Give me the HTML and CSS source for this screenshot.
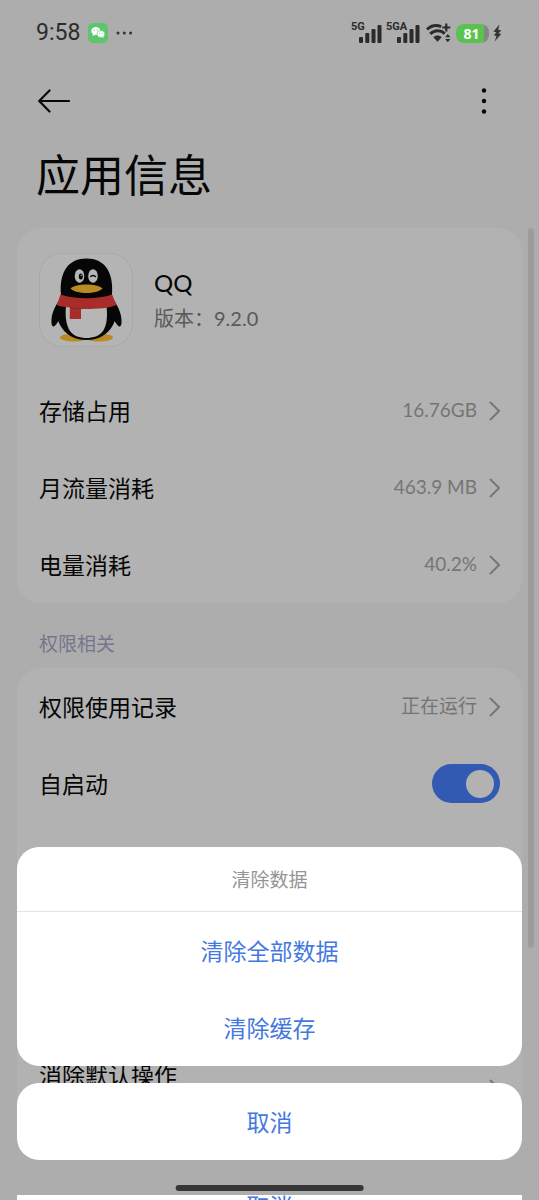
FILE: index.html
```html
<!DOCTYPE html>
<html lang="zh-CN">
<head>
<meta charset="utf-8">
<meta name="viewport" content="width=device-width, initial-scale=1">
<title>应用信息</title>
<link rel="stylesheet" href="styles.css">
</head>
<body>
<div class="screen">
  <header class="status">
    <div class="status-side">
      <span class="clock">9:58</span>
      <svg class="wechat" width="20" height="20" viewBox="0 0 20 20" aria-hidden="true">
        <rect width="20" height="20" rx="5" fill="#5bc66c"/>
        <ellipse cx="7.8" cy="8" rx="4.5" ry="3.9" fill="#fff"/>
        <path d="M5 10.500l-.5 2.500 2.800-1.300z" fill="#fff"/>
        <ellipse cx="12.800" cy="11" rx="4" ry="3.400" fill="#fff" stroke="#5bc66c" stroke-width=".6"/>
        <path d="M13.500 13.800l2.200 1-.4-2z" fill="#fff"/>
        <circle cx="6.300" cy="6.900" r=".6" fill="#5bc66c"/><circle cx="9.300" cy="6.900" r=".6" fill="#5bc66c"/>
        <circle cx="11.500" cy="10.200" r=".5" fill="#5bc66c"/><circle cx="14.100" cy="10.200" r=".5" fill="#5bc66c"/>
      </svg>
      <svg width="17" height="4" viewBox="0 0 17 4" fill="#333" aria-hidden="true"><circle cx="2" cy="2" r="1.500"/><circle cx="8.300" cy="2" r="1.500"/><circle cx="14.600" cy="2" r="1.500"/></svg>
    </div>
    <div class="status-side status-right">
      <div class="signal"><span class="net">5G</span><svg width="23" height="19" viewBox="0 0 23 19" fill="#2b2b2b" aria-hidden="true"><rect y="13" width="4" height="6" rx="1"/><rect x="6.300" y="9" width="4" height="10" rx="1"/><rect x="12.500" y="5" width="4" height="14" rx="1"/><rect x="18.500" y="1" width="4" height="18" rx="1"/></svg></div>
      <div class="signal signal-wide"><span class="net">5GA</span><svg width="23" height="19" viewBox="0 0 23 19" fill="#2b2b2b" aria-hidden="true"><rect y="13" width="4" height="6" rx="1"/><rect x="6.300" y="9" width="4" height="10" rx="1"/><rect x="12.500" y="5" width="4" height="14" rx="1"/><rect x="18.500" y="1" width="4" height="18" rx="1"/></svg></div>
      <svg class="wifi" width="25" height="20" viewBox="0 0 25 20" fill="none" stroke="#2b2b2b" aria-hidden="true">
        <path d="M1 6.500C5 2.700 10.500 1.800 15.200 3.600" stroke-width="3"/>
        <path d="M4.200 10.900C8.600 6.800 14.600 6.800 18.800 10.600" stroke-width="3"/>
        <path d="M7.300 14.200C9.800 12 13.400 12 15.700 14.200L11.500 18.800z" fill="#2b2b2b" stroke="none"/>
        <path d="M20.300 .5v8M16.300 4.500h8" stroke-width="2.200"/>
        <path d="M21.800 11l2.600 3.300h-5.200zM21.800 19.300l2.600-3.300h-5.200z" fill="#2b2b2b" stroke="none"/>
      </svg>
      <div class="battery"><span>81</span></div>
      <svg class="bolt" width="9" height="18" viewBox="0 0 9 18" fill="#333" aria-hidden="true"><path d="M6.500 .5L.5 7.500 3.500 8.500.7 11.200 3.500 12 1.600 17.500 8.300 10 5.300 9.200 8.300 6.600 5.200 5.800z"/></svg>
    </div>
  </header>

  <nav class="toolbar">
    <button class="icon-btn" type="button" aria-label="返回">
      <svg width="32" height="24" viewBox="0 0 32 24" fill="none" stroke="#080808" stroke-width="2.200" stroke-linecap="round" stroke-linejoin="round"><path d="M31 12H1.500M11.500 1.500L1.200 12l10.300 10.500"/></svg>
    </button>
    <button class="icon-btn" type="button" aria-label="更多">
      <svg width="6" height="26" viewBox="0 0 6 26" fill="#080808"><circle cx="3" cy="2.500" r="2.200"/><circle cx="3" cy="13" r="2.200"/><circle cx="3" cy="23.500" r="2.200"/></svg>
    </button>
  </nav>

  <h1 class="title">应用信息</h1>

  <main class="content">
    <section class="card">
      <div class="app">
        <svg class="app-icon" width="94" height="94" viewBox="0 0 94 94" aria-hidden="true">
          <rect x=".5" y=".5" width="93" height="93" rx="22" fill="#b4b4b4" stroke="#a9a9a9"/>
          <ellipse cx="35" cy="84.500" rx="14" ry="4" fill="#b88a21"/>
          <ellipse cx="60" cy="84.500" rx="14" ry="4" fill="#b88a21"/>
          <path d="M22 45C15 54 12 62 12.500 70c.2 4 2.500 4.500 4.500 1.500l6-8h49l6 8c2 3 4.200 2.500 4.500-1.500C83 62 80 54 73 45z" fill="#060606"/>
          <path d="M22 42C20 18 30 5.500 47.500 5.500S75 18 73 42c5 14 5 22 1 30-5 9-14 15-26.500 15S26 81 21 72c-4-8-4-16 1-30z" fill="#060606"/>
          <path d="M27.500 50h39.500c2 12 1 22-3 28-3.500 5-10 7-16.500 7S34.500 83 31 78c-4-6-5.500-16-3.500-28z" fill="#b6b6b6"/>
          <path d="M21.500 41.500C36 46.500 59 46.500 73 41.500l4.500 10.500c-9 3.500-22 4.300-35.500 4V66H30.800V54.500C26 54 21 53.500 17.800 52z" fill="#a82c2a"/>
          <path d="M31 54.500c4 .9 7 1.300 11 1.500" stroke="#8d2424" fill="none"/>
          <ellipse cx="40.500" cy="23" rx="4.800" ry="6.800" fill="#b6b6b6"/>
          <ellipse cx="54" cy="23" rx="4.800" ry="6.800" fill="#b6b6b6"/>
          <ellipse cx="41.800" cy="23.500" rx="2" ry="3" fill="#060606"/><circle cx="42.200" cy="22.200" r=".7" fill="#b6b6b6"/>
          <path d="M51.300 24c1.300-2 4-2 5.500 0" fill="none" stroke="#060606" stroke-width="1.300"/>
          <path d="M31.500 35.500C37 30.300 58 30.300 63.500 35.500C58 41.500 37 41.500 31.500 35.500z" fill="#b88a21"/>
        </svg>
        <div class="app-text">
          <h2 class="app-name">QQ</h2>
          <p class="app-version">版本：9.2.0</p>
        </div>
      </div>
      <a class="row" href="#storage"><span class="label">存储占用</span><span class="value">16.76GB</span><svg class="chevron" viewBox="0 0 11 20"><path d="M1 1l9 9-9 9"/></svg></a>
      <a class="row" href="#data"><span class="label">月流量消耗</span><span class="value">463.9 MB</span><svg class="chevron" viewBox="0 0 11 20"><path d="M1 1l9 9-9 9"/></svg></a>
      <a class="row" href="#power"><span class="label">电量消耗</span><span class="value">40.2%</span><svg class="chevron" viewBox="0 0 11 20"><path d="M1 1l9 9-9 9"/></svg></a>
    </section>

    <h3 class="section">权限相关</h3>

    <section class="card">
      <a class="row" href="#records"><span class="label">权限使用记录</span><span class="value">正在运行</span><svg class="chevron" viewBox="0 0 11 20"><path d="M1 1l9 9-9 9"/></svg></a>
      <div class="row"><label class="label" for="autostart">自启动</label><input class="toggle" id="autostart" type="checkbox" checked></div>
      <a class="row row-tall" href="#defaults"><span class="label">消除默认操作</span><svg class="chevron" viewBox="0 0 11 20"><path d="M1 1l9 9-9 9"/></svg></a>
    </section>
  </main>

  <div class="scrollbar"></div>

  <div class="sheet" role="dialog" aria-labelledby="sheet-title">
    <div class="panel">
      <h2 class="sheet-title" id="sheet-title">清除数据</h2>
      <button class="action" type="button">清除全部数据</button>
      <button class="action" type="button">清除缓存</button>
    </div>
    <div class="panel"><button class="action" type="button">取消</button></div>
  </div>

  <div class="under"><button class="action" type="button">取消</button></div>
  <div class="home"></div>
</div>
</body>
</html>
```
FILE: styles.css
```css
* { box-sizing: border-box; }

body {
  margin: 0;
  background: #adadad;
  color: #060606;
  font-family: "Noto Sans CJK SC", sans-serif;
}

h1, h2, h3, p { margin: 0; font-weight: 400; }

button {
  border: 0;
  padding: 0;
  background: none;
  font: inherit;
}

.screen {
  position: relative;
  height: 100vh;
  overflow: hidden;
}

.status {
  display: flex;
  justify-content: space-between;
  align-items: center;
  height: 66px;
  padding: 0 37px 0 36px;
}

.status-side { display: flex; align-items: center; gap: 8px; }
.clock { font: 400 23px/32px Roboto, sans-serif; color: #2b2b2b; }
.status-right { gap: 0; }

.signal {
  position: relative;
  display: flex;
  justify-content: flex-end;
  width: 31px;
}
.signal-wide { width: 34px; margin-left: 4px; }
.net {
  position: absolute;
  left: 0;
  top: -3px;
  font: 700 11px/12px Roboto, sans-serif;
  color: #2b2b2b;
}
.wifi { margin: 0 5px 0 6px; }

.battery {
  display: flex;
  align-items: center;
  justify-content: center;
  width: 33px;
  height: 19px;
  padding-right: 2px;
  border-radius: 8px;
  background: linear-gradient(90deg, #5ac34f 28px, #858585 28px);
  color: #fff;
  font: 700 14px/19px "Open Sans", sans-serif;
}
.bolt { margin-left: 4px; }

.toolbar {
  display: flex;
  justify-content: space-between;
  align-items: center;
  height: 70px;
  padding: 0 52px 0 38px;
}
.icon-btn { display: flex; }

.title {
  padding: 5px 36px 23px;
  font-size: 44px;
  line-height: 64px;
}

.content { padding: 0 17px; }

.card {
  padding: 0 22px;
  border-radius: 24px;
  background: #b2b2b2;
}

.app {
  display: flex;
  align-items: center;
  gap: 21px;
  height: 144px;
}
.app-icon { flex: none; }
.app-name { font: 400 24px/36px Lato, sans-serif; }
.app-version {
  color: #595959;
  font-family: Lato, "Noto Sans CJK SC", sans-serif;
  font-size: 20px;
  line-height: 34px;
}

.row {
  display: flex;
  align-items: center;
  height: 77px;
  color: inherit;
  text-decoration: none;
}
.label {
  flex: 1;
  padding-bottom: 2px;
  font-size: 23px;
  line-height: 34px;
}
.value {
  margin-right: 12px;
  padding-bottom: 2px;
  color: #757575;
  font-family: Lato, "Noto Sans CJK SC", sans-serif;
  font-size: 19px;
  line-height: 28px;
}
.chevron {
  width: 11px;
  height: 20px;
  fill: none;
  stroke: #777;
  stroke-width: 2;
}

.section {
  padding: 26px 22px 11px;
  color: #74778c;
  font-size: 19px;
  line-height: 28px;
}

.toggle {
  appearance: none;
  display: flex;
  align-items: center;
  justify-content: flex-end;
  width: 68px;
  height: 39px;
  margin: 0;
  padding: 6px;
  border-radius: 20px;
  background: #325ab2;
}
.toggle::before {
  content: "";
  width: 28px;
  height: 28px;
  border-radius: 50%;
  background: #b2b2b2;
}

.row-tall {
  height: 100px;
  margin-top: 217px;
}
.row-tall .label { padding-bottom: 30px; }

.scrollbar {
  position: absolute;
  top: 228px;
  right: 5px;
  width: 6px;
  height: 60%;
  border-radius: 3px;
  background: #9c9c9c;
}

.sheet {
  position: absolute;
  left: 17px;
  right: 17px;
  bottom: 40px;
  display: grid;
  gap: 17px;
}
.panel {
  border-radius: 22px;
  background: #fff;
  overflow: hidden;
}
.sheet-title {
  border-bottom: 1px solid #e4e4e4;
  color: #949494;
  font-size: 19px;
  line-height: 64px;
  text-align: center;
}
.action {
  display: block;
  width: 100%;
  color: #4478e0;
  font-size: 23px;
  line-height: 77px;
}

.under {
  position: absolute;
  left: 17px;
  right: 17px;
  bottom: 0;
  display: flex;
  align-items: flex-start;
  height: 5px;
  background: #fff;
  overflow: hidden;
}
.under .action { line-height: 20px; }

.home {
  position: absolute;
  bottom: 9px;
  left: 50%;
  width: 35%;
  height: 6px;
  border-radius: 3px;
  background: #363636;
  transform: translateX(-50%);
}
```
